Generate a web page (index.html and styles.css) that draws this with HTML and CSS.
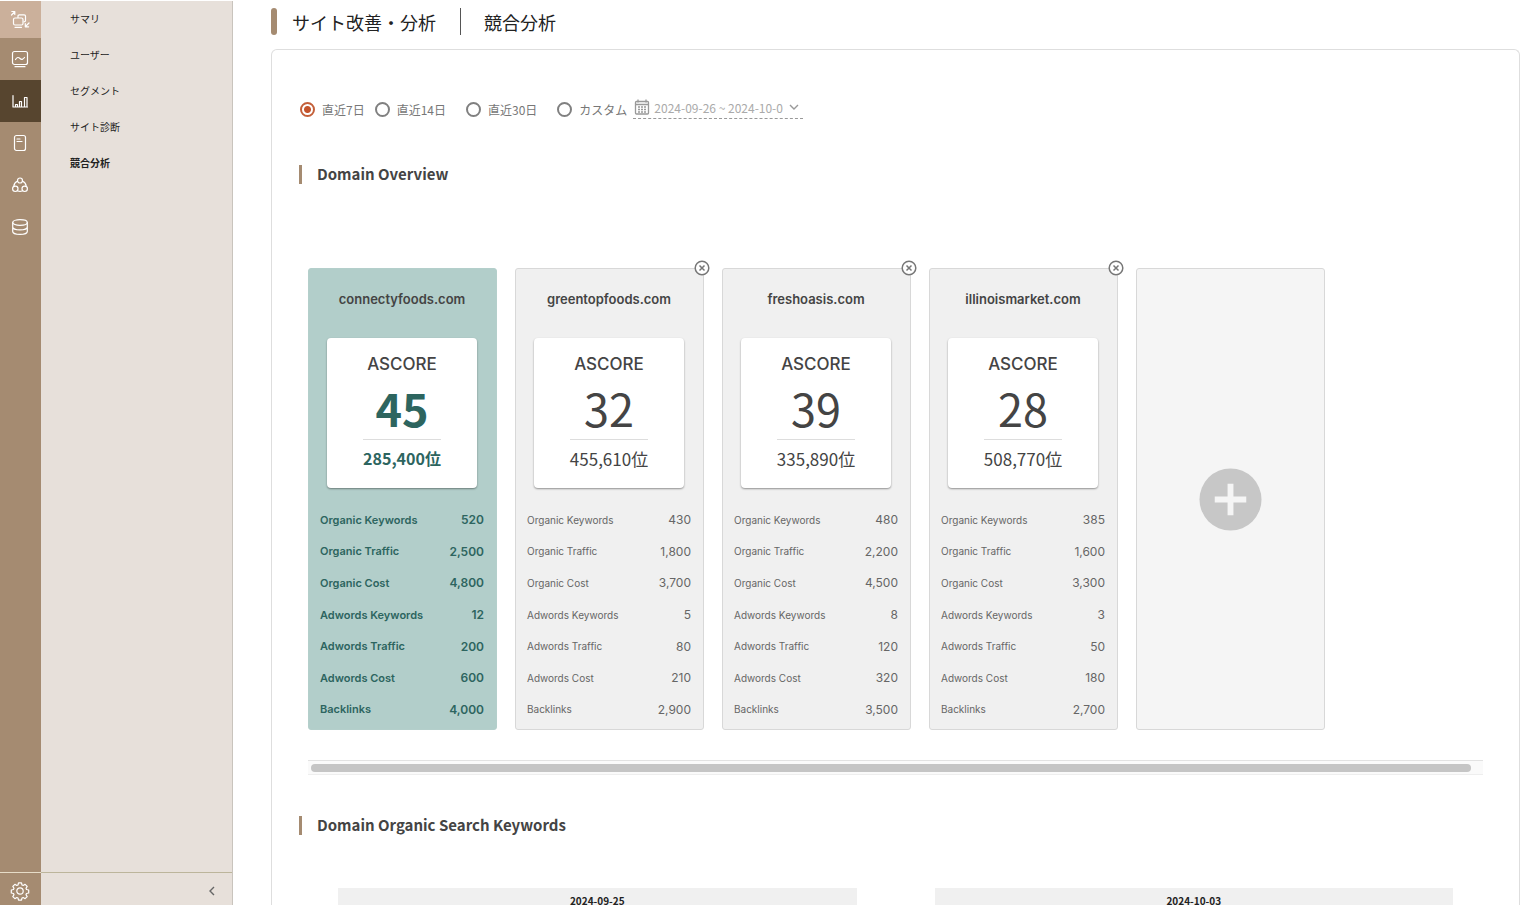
FILE: index.html
```html
<!DOCTYPE html>
<html lang="ja">
<head>
<meta charset="utf-8">
<title>サイト改善・分析 | 競合分析</title>
<link rel="stylesheet" href="styles.css">
</head>
<body>
<div class="app">
  <nav class="rail" aria-label="メイン">
    <button class="rail-item rail-switch" type="button" aria-label="切り替え">
      <svg class="icon" viewBox="0 0 20 20"><rect x="3.500" y="8" width="9.500" height="7" rx="1.500"/><path d="M8 7.500V6q0-1.200 1.200-1.200h5q1.300 0 1.300 1.200v4.500q0 1.300-1.500 1.300M5 17.300h6.500M1.500 5l3-3M1.800 1.500h3v3M19 13l-3.500 3.500M15.300 13.500v3.300h3.300"/></svg>
    </button>
    <button class="rail-item" type="button" aria-label="ダッシュボード">
      <svg class="icon" viewBox="0 0 20 20"><rect x="2.500" y="2.500" width="15" height="13" rx="2"/><path d="M5.500 10.500c1.500-2.500 3-2.500 4.500-1s3 1 4.500-1M5 17.700h10"/></svg>
    </button>
    <button class="rail-item is-active" type="button" aria-label="サイト改善・分析">
      <svg class="icon" viewBox="0 0 20 20"><path d="M3 4.500v11.500h14.500M5.500 16v-2.500h2V16M9.500 16v-5.500h2V16M14.500 16V6.500h2.500V16"/></svg>
    </button>
    <button class="rail-item" type="button" aria-label="レポート">
      <svg class="icon" viewBox="0 0 20 20"><rect x="4.500" y="2.500" width="11" height="15" rx="2"/><path d="M7 6h3M7 8.500h5"/></svg>
    </button>
    <button class="rail-item" type="button" aria-label="グループ">
      <svg class="icon" viewBox="0 0 20 20"><circle cx="10" cy="5.500" r="2.500"/><circle cx="5.300" cy="13.800" r="2.700"/><circle cx="14.700" cy="13.800" r="2.700"/><path d="M7.600 6C5.500 7 4 9 3.800 11.200M12.400 6c2.100 1 3.600 3 3.800 5.200M7.500 15.800q2.500 1.200 5 0"/></svg>
    </button>
    <button class="rail-item" type="button" aria-label="データ">
      <svg class="icon" viewBox="0 0 20 20"><ellipse cx="10" cy="5.500" rx="7.300" ry="2.800"/><path d="M2.700 5.500v9c0 1.500 3 2.900 7.300 2.900s7.300-1.400 7.300-2.900v-9M2.700 10c0 1.500 3 2.900 7.300 2.900s7.300-1.400 7.300-2.900"/></svg>
    </button>
    <button class="rail-item rail-settings" type="button" aria-label="設定">
      <svg class="icon" viewBox="0 0 20 20"><circle cx="10" cy="10" r="3.200"/><path d="M8.500 1.800h3l.5 2.200 1.200.5 1.900-1.200 2.100 2.100-1.200 1.900.5 1.200 2.200.5v3l-2.200.5-.5 1.200 1.200 1.900-2.100 2.100-1.900-1.200-1.200.5-.5 2.200h-3L8 17l-1.200-.5-1.900 1.200-2.100-2.100L4 13.700l-.5-1.200-2.200-.5V9l2.200-.5L4 7.300 2.800 5.400l2.100-2.100 1.900 1.200L8 4z"/></svg>
    </button>
  </nav>

  <aside class="submenu">
    <ul class="submenu-list">
      <li><a class="submenu-link" href="#">サマリ</a></li>
      <li><a class="submenu-link" href="#">ユーザー</a></li>
      <li><a class="submenu-link" href="#">セグメント</a></li>
      <li><a class="submenu-link" href="#">サイト診断</a></li>
      <li><a class="submenu-link is-current" href="#" aria-current="page">競合分析</a></li>
    </ul>
    <div class="submenu-footer">
      <button class="collapse" type="button" aria-label="メニューを閉じる">
        <svg class="chevron" viewBox="0 0 10 10"><path d="M7 1L3 5l4 4"/></svg>
      </button>
    </div>
  </aside>

  <main class="main">
    <header class="page-head">
      <h1 class="page-title">サイト改善・分析</h1>
      <span class="page-sub">競合分析</span>
    </header>

    <section class="panel">
      <form class="range">
        <label class="range-option"><input class="radio" type="radio" name="range" checked>直近7日</label>
        <label class="range-option"><input class="radio" type="radio" name="range">直近14日</label>
        <label class="range-option"><input class="radio" type="radio" name="range">直近30日</label>
        <label class="range-option"><input class="radio" type="radio" name="range">カスタム</label>
        <span class="date">
          <svg class="calendar" viewBox="0 0 16 16"><rect x="1.500" y="2.500" width="13" height="12.500" rx="1"/><path d="M1.500 5.500h13M4 .5v3M12 .5v3"/><path class="dots" d="M4 8h8M4 10.500h8M4 13h8"/></svg>
          <input class="date-input" type="text" value="2024-09-26 ~ 2024-10-0" aria-label="期間" readonly>
          <svg class="chevron" viewBox="0 0 10 10"><path d="M1 3l4 4 4-4"/></svg>
        </span>
      </form>

      <h2 class="section-title">Domain Overview</h2>

      <div class="cards">
        <article class="card card-own">
          <h3 class="card-name">connectyfoods.com</h3>
          <div class="score"><span class="score-label">ASCORE</span><span class="score-value">45</span><span class="score-rank">285,400位</span></div>
          <dl class="stats">
            <div class="stat"><dt>Organic Keywords</dt><dd>520</dd></div>
            <div class="stat"><dt>Organic Traffic</dt><dd>2,500</dd></div>
            <div class="stat"><dt>Organic Cost</dt><dd>4,800</dd></div>
            <div class="stat"><dt>Adwords Keywords</dt><dd>12</dd></div>
            <div class="stat"><dt>Adwords Traffic</dt><dd>200</dd></div>
            <div class="stat"><dt>Adwords Cost</dt><dd>600</dd></div>
            <div class="stat"><dt>Backlinks</dt><dd>4,000</dd></div>
          </dl>
        </article>
        <article class="card">
          <button class="remove" type="button" aria-label="greentopfoods.comを削除"><svg class="remove-icon" viewBox="0 0 16 16"><circle cx="8" cy="8" r="6.800"/><path d="M5.500 5.500l5 5M10.500 5.500l-5 5"/></svg></button>
          <h3 class="card-name">greentopfoods.com</h3>
          <div class="score"><span class="score-label">ASCORE</span><span class="score-value">32</span><span class="score-rank">455,610位</span></div>
          <dl class="stats">
            <div class="stat"><dt>Organic Keywords</dt><dd>430</dd></div>
            <div class="stat"><dt>Organic Traffic</dt><dd>1,800</dd></div>
            <div class="stat"><dt>Organic Cost</dt><dd>3,700</dd></div>
            <div class="stat"><dt>Adwords Keywords</dt><dd>5</dd></div>
            <div class="stat"><dt>Adwords Traffic</dt><dd>80</dd></div>
            <div class="stat"><dt>Adwords Cost</dt><dd>210</dd></div>
            <div class="stat"><dt>Backlinks</dt><dd>2,900</dd></div>
          </dl>
        </article>
        <article class="card">
          <button class="remove" type="button" aria-label="freshoasis.comを削除"><svg class="remove-icon" viewBox="0 0 16 16"><circle cx="8" cy="8" r="6.800"/><path d="M5.500 5.500l5 5M10.500 5.500l-5 5"/></svg></button>
          <h3 class="card-name">freshoasis.com</h3>
          <div class="score"><span class="score-label">ASCORE</span><span class="score-value">39</span><span class="score-rank">335,890位</span></div>
          <dl class="stats">
            <div class="stat"><dt>Organic Keywords</dt><dd>480</dd></div>
            <div class="stat"><dt>Organic Traffic</dt><dd>2,200</dd></div>
            <div class="stat"><dt>Organic Cost</dt><dd>4,500</dd></div>
            <div class="stat"><dt>Adwords Keywords</dt><dd>8</dd></div>
            <div class="stat"><dt>Adwords Traffic</dt><dd>120</dd></div>
            <div class="stat"><dt>Adwords Cost</dt><dd>320</dd></div>
            <div class="stat"><dt>Backlinks</dt><dd>3,500</dd></div>
          </dl>
        </article>
        <article class="card">
          <button class="remove" type="button" aria-label="illinoismarket.comを削除"><svg class="remove-icon" viewBox="0 0 16 16"><circle cx="8" cy="8" r="6.800"/><path d="M5.500 5.500l5 5M10.500 5.500l-5 5"/></svg></button>
          <h3 class="card-name">illinoismarket.com</h3>
          <div class="score"><span class="score-label">ASCORE</span><span class="score-value">28</span><span class="score-rank">508,770位</span></div>
          <dl class="stats">
            <div class="stat"><dt>Organic Keywords</dt><dd>385</dd></div>
            <div class="stat"><dt>Organic Traffic</dt><dd>1,600</dd></div>
            <div class="stat"><dt>Organic Cost</dt><dd>3,300</dd></div>
            <div class="stat"><dt>Adwords Keywords</dt><dd>3</dd></div>
            <div class="stat"><dt>Adwords Traffic</dt><dd>50</dd></div>
            <div class="stat"><dt>Adwords Cost</dt><dd>180</dd></div>
            <div class="stat"><dt>Backlinks</dt><dd>2,700</dd></div>
          </dl>
        </article>
        <button class="card card-add" type="button" aria-label="ドメインを追加">
          <svg class="add-icon" viewBox="0 0 64 64"><circle cx="32" cy="32" r="31.500"/><path d="M32 16v32M16 32h32"/></svg>
        </button>
      </div>

      <div class="scroll-track"><div class="scroll-thumb"></div></div>

      <h2 class="section-title">Domain Organic Search Keywords</h2>

      <div class="tables">
        <table class="keywords"><thead><tr><th>2024-09-25</th></tr></thead></table>
        <table class="keywords"><thead><tr><th>2024-10-03</th></tr></thead></table>
      </div>
    </section>
  </main>
</div>
</body>
</html>
```
FILE: styles.css
```css
* { box-sizing: border-box; }

body {
  margin: 0;
  overflow: hidden;
  background: #fff;
  color: #444;
  font-family: "Noto Sans CJK JP", sans-serif;
  font-size: 12px;
}

button {
  margin: 0;
  padding: 0;
  border: 0;
  background: none;
  font: inherit;
  color: inherit;
}

.app {
  display: flex;
  height: 100vh;
  padding-top: 1px;
}

/* icon rail */
.rail {
  display: flex;
  flex: none;
  flex-direction: column;
  width: 41px;
  background: #a58b71;
}

.rail-item {
  display: grid;
  place-items: center;
  height: 42px;
  padding-right: 2px;
  color: #fff;
}

.rail-switch { height: 37px; background: #cbb09b; }
.rail-item.is-active { background: #57452f; }

.rail-settings {
  height: 33px;
  margin-top: auto;
  border-top: 1px solid #e6dcc8;
  padding-top: 3px;
}

.icon {
  width: 20px;
  height: 20px;
  fill: none;
  stroke: currentColor;
  stroke-width: 1.2;
  stroke-linecap: round;
  stroke-linejoin: round;
}

/* second level menu */
.submenu {
  display: flex;
  flex: none;
  flex-direction: column;
  width: 192px;
  border-right: 1px solid #c9c4bd;
  background: #e7e0da;
}

.submenu-list {
  flex: 1;
  margin: 0;
  padding: 0;
  list-style: none;
}

.submenu-link {
  display: block;
  padding-left: 29px;
  color: #222;
  font-size: 10px;
  line-height: 36px;
  text-decoration: none;
}

.submenu-link.is-current { font-weight: 700; }

.submenu-footer {
  display: flex;
  justify-content: flex-end;
  height: 33px;
  padding: 3px 12px 0 0;
  border-top: 1px solid #bcb59b;
}

.collapse {
  display: grid;
  place-items: center;
  width: 16px;
}

.chevron {
  width: 10px;
  height: 10px;
  fill: none;
  stroke: #666;
  stroke-width: 1.4;
}

/* page */
.main {
  display: flex;
  flex: 1;
  flex-direction: column;
  min-width: 0;
  padding: 7px 17px 0 38px;
}

.page-head {
  display: flex;
  flex: none;
  align-items: center;
  height: 27px;
  margin-bottom: 14px;
  color: #222;
  font-size: 18px;
  line-height: 29px;
}

.page-head::before {
  width: 6px;
  height: 27px;
  margin-right: 15px;
  border-radius: 3px;
  background: #a58b71;
  content: "";
}

.page-title {
  margin: 0;
  font-size: 18px;
  font-weight: 400;
}

.page-title,
.page-sub {
  height: 27px;
}

.page-sub {
  margin-left: 24px;
  padding-left: 23px;
  border-left: 1px solid #555;
}

.panel {
  flex: 1;
  padding: 47px 36px 0 27px;
  border: 1px solid #dedede;
  border-bottom: 0;
  border-radius: 6px 6px 0 0;
}

.range {
  display: flex;
  align-items: center;
  height: 24px;
  padding-left: 1px;
  color: #777;
}

.range-option {
  display: flex;
  align-items: center;
  gap: 7px;
  margin-right: 20px;
}

.range-option:first-child { margin-right: 10px; }
.range-option:nth-child(4) { margin-right: 6px; }

.radio {
  width: 15px;
  height: 15px;
  margin: 0;
  border: 2px solid #808080;
  border-radius: 50%;
  appearance: none;
}

.radio:checked {
  border-color: #c4603a;
  background: radial-gradient(circle, #c4532b 3px, #fff 4px);
}

.date {
  display: flex;
  align-items: center;
  align-self: flex-start;
  width: 170px;
  height: 22px;
  padding: 0 4px 1px 1px;
  border-bottom: 1px dashed #999;
}

.calendar {
  flex: none;
  width: 16px;
  height: 16px;
  fill: none;
  stroke: #999;
  stroke-width: 1.3;
}

.dots { stroke-dasharray: 2 1; }

.date-input {
  flex: 1;
  min-width: 0;
  padding: 0 0 0 4px;
  border: 0;
  outline: 0;
  background: none;
  color: #aaa;
  font: inherit;
}

.date .chevron { stroke: #999; }

.section-title {
  display: flex;
  align-items: center;
  gap: 15px;
  height: 20px;
  margin: 43px 0 0;
  color: #444;
  font-size: 15px;
  line-height: 20px;
}

.section-title::before {
  width: 3px;
  height: 19px;
  background: #a58b71;
  content: "";
}

/* domain cards */
.cards {
  display: flex;
  gap: 18px;
  margin: 84px 0 0 9px;
}

.card {
  position: relative;
  display: flex;
  flex: none;
  flex-direction: column;
  width: 189px;
  min-height: 462px;
  padding: 18px 12px 4px 11px;
  border: 1px solid #d8d8d8;
  border-radius: 3px;
  background: #f0f0f0;
  font-family: Inter, "Noto Sans CJK JP", sans-serif;
}

.card-own {
  border-color: #b4cfcb;
  background: #b2ceca;
}

.card-name {
  margin: 0;
  color: #444;
  font-size: 13px;
  font-weight: 600;
  line-height: 25px;
  text-align: center;
}

.score {
  display: flex;
  flex-direction: column;
  align-items: center;
  align-self: center;
  width: 150px;
  height: 150px;
  margin: 26px 0 16px;
  padding-top: 14px;
  border-radius: 4px;
  background: #fff;
  box-shadow: 0 1px 2px rgba(0, 0, 0, 0.4);
}

.score-label {
  font-size: 17px;
  font-weight: 500;
  line-height: 24px;
}

.score-value {
  font-family: "Noto Sans CJK JP", sans-serif;
  font-size: 45px;
  line-height: 63px;
}

.score-rank {
  border-top: 1px solid #ddd;
  font-family: "Noto Sans CJK JP", sans-serif;
  font-size: 17px;
  line-height: 37px;
}

.stats {
  display: flex;
  flex: 1;
  flex-direction: column;
  margin: 0;
  color: #666;
}

.stat {
  display: flex;
  flex: 1;
  align-items: center;
  justify-content: space-between;
  font-size: 10px;
}

.stat dd {
  margin: 0;
  font-size: 12px;
}

.card-own .score-value,
.card-own .score-rank,
.card-own .stats {
  color: #2d655f;
  font-weight: 700;
}

.card-own .score-rank { font-size: 16px; }
.card-own .stats { font-weight: 600; }
.card-own .stat { font-size: 11px; }

.remove {
  position: absolute;
  top: -9px;
  right: -7px;
  width: 16px;
  height: 16px;
}

.remove-icon {
  display: block;
  fill: #fff;
  stroke: #777;
  stroke-width: 1.5;
}

.card-add {
  align-items: center;
  justify-content: center;
  padding: 0;
  background: #f5f5f5;
}

.add-icon {
  width: 63px;
  height: 63px;
  fill: #c7c7c7;
  stroke: #f5f5f5;
  stroke-width: 6;
}

.add-icon circle { stroke: none; }

.scroll-track {
  height: 15px;
  margin: 30px 0 0 9px;
  padding: 3px 12px 3px 3px;
  border-top: 1px solid #e2e2e2;
  border-bottom: 1px solid #eee;
  background: #fafafa;
}

.scroll-thumb {
  height: 8px;
  border-radius: 4px;
  background: #c5c5c5;
}

.scroll-track + .section-title { margin-top: 40px; }

.tables {
  display: grid;
  grid-template-columns: 1fr 1fr;
  gap: 78px;
  margin: 53px 30px 0 39px;
}

.keywords {
  width: 100%;
  border-collapse: collapse;
}

.keywords th {
  padding: 0;
  background: #f0f0f0;
  color: #222;
  font-size: 10px;
  line-height: 26px;
}
```
